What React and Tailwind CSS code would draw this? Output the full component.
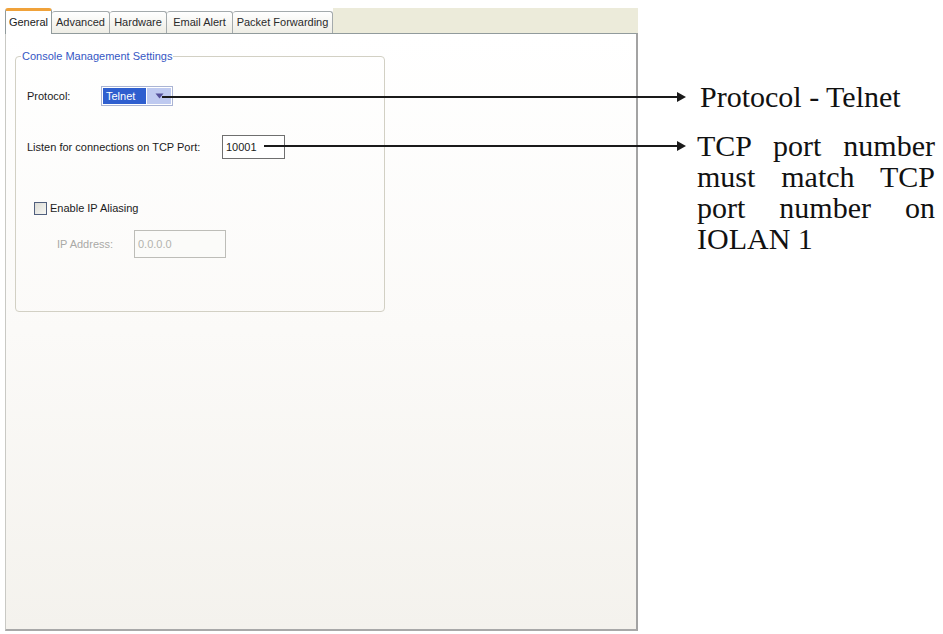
const TABS = [
  { label: 'General', w: 'w-[47px]', active: true },
  { label: 'Advanced', w: 'w-[58px]' },
  { label: 'Hardware', w: 'w-[57px]' },
  { label: 'Email Alert', w: 'w-[66px]' },
  { label: 'Packet Forwarding', w: 'w-[100px]' },
];

function Arrow({ top, left, width }) {
  return (
    <div className="absolute flex items-center" style={{ top, left }}>
      <div className="h-[2px] bg-[#1a1a1a]" style={{ width }} />
      <div className="w-0 h-0 border-l-[9px] border-l-[#1a1a1a] border-y-[5px] border-y-transparent" />
    </div>
  );
}

export default function App() {
  return (
    <div className="relative w-[943px] h-[634px] bg-white overflow-hidden flex font-['Liberation_Sans',Arial,sans-serif]">
      {/* Settings panel */}
      <div className="w-[640px] pt-[8px] pl-[5px] text-[11px] text-[#1b1b1b]">
        <div className="w-[633px]">
          {/* Tabs */}
          <div className="flex items-end h-[25px]">
            {TABS.map(({ label, w, active }) =>
              active ? (
                <div
                  key={label}
                  className={`${w} h-[26px] -mb-px z-10 flex items-center justify-center bg-white border border-b-0 border-[#919b9c] border-t-[3px] border-t-[#f0a23a] rounded-t-[3px]`}
                >
                  {label}
                </div>
              ) : (
                <div
                  key={label}
                  className={`${w} h-[22px] flex items-center justify-center bg-linear-to-b from-white to-[#eeede5] border border-b-0 border-l-0 border-[#a4aaac] rounded-t-[3px] text-[#2a2a2a]`}
                >
                  {label}
                </div>
              )
            )}
            <div className="flex-1 h-[25px] bg-[#ecebda]" />
          </div>

          {/* Body */}
          <div className="h-[598px] border-t border-t-[#919b9c] border-l border-l-[#c9c9c4] border-r-2 border-r-[#a3a3a3] border-b-2 border-b-[#a8a8a8] bg-linear-to-b from-white via-[#fbfaf8] to-[#f4f2ed] pl-[9px] pt-[16px]">
            <fieldset className="w-[370px] h-[262px] border border-[#d2d0c4] rounded-[4px]">
              <legend className="ml-[5px] px-[1px] leading-[13px] text-[#3557c4]">Console Management Settings</legend>
              <div className="pl-[11px] flex flex-col">
                {/* Protocol */}
                <div className="mt-[23px] flex items-center h-[20px]">
                  <span className="w-[74px]">Protocol:</span>
                  <div className="flex h-[20px] w-[72px] border border-[#aab4d4] bg-white p-px">
                    <div className="w-[43px] bg-[#2f5fcf] text-white pl-[3px] flex items-center">Telnet</div>
                    <div className="flex-1 ml-px bg-[#bfcaf0] flex items-center justify-center">
                      <svg width="9" height="6" viewBox="0 0 9 6">
                        <path d="M0.5 0.5 L8.5 0.5 L4.5 5.5 Z" fill="#55509a" />
                      </svg>
                    </div>
                  </div>
                </div>

                {/* TCP port */}
                <div className="mt-[29px] flex items-center h-[24px]">
                  <span className="w-[195px]">Listen for connections on TCP Port:</span>
                  <div className="w-[63px] h-[24px] border border-[#6f6f6f] bg-white pl-[3px] flex items-center">10001</div>
                </div>

                {/* IP aliasing */}
                <div className="mt-[42px] ml-[7px] flex items-center h-[14px] gap-[3px]">
                  <div className="w-[13px] h-[13px] border border-[#51607e] bg-linear-to-br from-[#dcdcd6] to-[#f7f7f3]" />
                  <span>Enable IP Aliasing</span>
                </div>
                <div className="mt-[15px] ml-[30px] flex items-center h-[28px]">
                  <span className="w-[77px] text-[#a9a9a6]">IP Address:</span>
                  <div className="w-[92px] h-[28px] border border-[#bdbdb8] bg-[#fbfbf9] pl-[3px] flex items-center text-[#b3b3ae]">0.0.0.0</div>
                </div>
              </div>
            </fieldset>
          </div>
        </div>
      </div>

      {/* Annotations */}
      <div className="ml-[57px] w-[238px] pt-[81px] font-['Liberation_Serif','Times_New_Roman',serif] text-[30px] leading-[31px] text-[#111]">
        <div className="pl-[3px]">Protocol - Telnet</div>
        <p className="mt-[18px] text-justify">
          TCP port number must match TCP port number on IOLAN 1
        </p>
      </div>

      <Arrow top={92} left={162} width={515} />
      <Arrow top={141} left={264} width={413} />
    </div>
  );
}
